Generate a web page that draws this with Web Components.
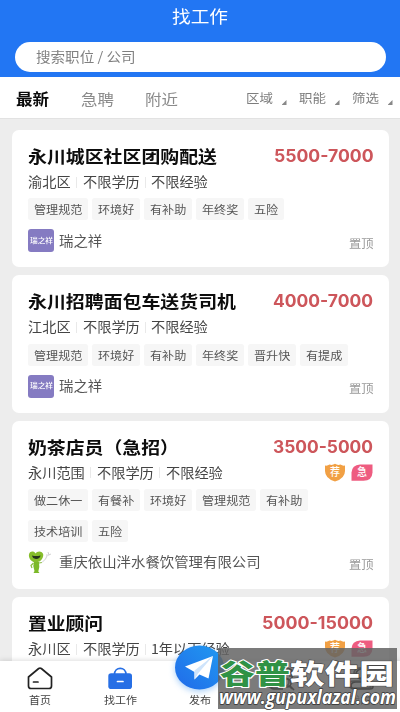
<!DOCTYPE html>
<html lang="zh-CN">
<head>
<meta charset="utf-8">
<title>找工作</title>
<style>
html,body{margin:0;padding:0;height:100%;overflow:hidden;background:#ededed}
body{font-family:"Noto Sans CJK SC",sans-serif}
</style>
</head>
<body>
<job-app></job-app>
<script>
const define = (name, html, setup) => {
  const tpl = document.createElement('template');
  tpl.innerHTML = html;
  customElements.define(name, class extends HTMLElement {
    connectedCallback() {
      if (this.shadowRoot) return;
      this.attachShadow({mode: 'open'}).append(tpl.content.cloneNode(true));
      if (setup) setup(this, this.shadowRoot);
    }
  });
};

/* Text set to an exact width: the glyphs are widened from their natural advance. */
define('wide-text', `
<style>
:host{display:inline-block;flex:none;white-space:nowrap;line-height:20px;height:20px}
span{display:inline-block;transform-origin:0 50%;white-space:pre}
</style><span></span>`, (el, root) => {
  const s = root.querySelector('span');
  s.textContent = el.getAttribute('text');
  el.style.fontSize = el.getAttribute('size') + 'px';
  const w = +el.getAttribute('w');
  const natural = s.offsetWidth ? s.getBoundingClientRect().width : w;
  el.style.width = w + 'px';
  s.style.transform = `scaleX(${w / natural})`;
});

define('search-bar', `
<style>
:host{display:flex;align-items:center;height:30px;margin:0 14px 0 15px;padding-left:21px;box-sizing:border-box;border-radius:15px;background:#fff;color:#808080}
</style><wide-text text="搜索职位 / 公司" size="13.3" w="99.5"></wide-text>`);

define('app-header', `
<style>
:host{display:flex;flex-direction:column;height:77px;background:#2276f3;color:#fff;flex:none}
.t{display:flex;justify-content:center;height:42px;padding-top:6px;box-sizing:border-box}
</style><div class="t"><wide-text text="找工作" size="17" w="56"></wide-text></div><search-bar></search-bar>`);

customElements.define('tab-bar', class extends HTMLElement {
  connectedCallback() {
    this.attachShadow({mode:'open'}).innerHTML = `
<style>
:host{display:flex;align-items:center;height:42px;padding-left:16px;box-sizing:border-box;background:#fff;border-bottom:1px solid #e2e2e2;flex:none}
.tabs{display:flex;gap:31.500px;color:#8b8b8b;width:230px;flex:none}
.on{color:#0b0b0b;font-weight:700}
.f{display:flex;color:#7d7d7d;padding-top:1px;gap:12.500px}
.f div{display:flex;flex:none}
i{width:5px;height:5px;margin:12px 0 0 8.500px;background:#888;clip-path:polygon(100% 0,100% 100%,0 100%)}
</style>
<div class="tabs"><wide-text class="on" text="最新" size="15.5" w="33"></wide-text><wide-text text="急聘" size="15.2" w="33"></wide-text><wide-text text="附近" size="15.2" w="33"></wide-text></div>
<div class="f">${['区域','职能','筛选'].map(t=>`<div><wide-text text="${t}" size="12" w="27"></wide-text><i></i></div>`).join('')}</div>`;
  }
});

define('tag-chip', `
<style>
:host{display:flex;align-items:center;justify-content:center;height:22px;border-radius:2.500px;background:#f6f6f6;color:#555}
</style>`, (el, root) => {
  const t = el.getAttribute('text');
  const w = t.length * 12.1;
  el.style.width = (w + 11.6) + 'px';
  root.innerHTML += `<wide-text text="${t}" size="11.5" w="${w}"></wide-text>`;
});

define('job-badges', `
<style>:host{display:flex;gap:5px}svg{display:block}text{font:500 11px "Noto Sans CJK SC",sans-serif;fill:#fff}</style>
<svg width="22" height="20" viewBox="0 0 22 20"><path d="M1 2.500Q3.500 3 5.500 1.600Q8.500 2.600 11 .8Q13.500 2.600 16.500 1.600Q18.500 3 21 2.500V8Q21 15.500 11 18.500Q1 15.500 1 8Z" fill="#f1a044"/><text x="6" y="13" textLength="10" lengthAdjust="spacingAndGlyphs">荐</text></svg>
<svg width="22" height="20" viewBox="0 0 22 20"><path d="M9 1.500H21.500V9.500Q21 17.800 12.500 17.800H.5V9.500Q1 2 9 1.500Z" fill="#ee5c80"/><text x="6" y="13" textLength="10" lengthAdjust="spacingAndGlyphs">急</text></svg>`);

define('company-logo', `
<style>
:host{display:block;width:26px;height:23px;flex:none}
.p{height:23px;border-radius:3px;background:#857bc2;color:#fff;display:flex;align-items:center;justify-content:center;font-weight:500}
.p wide-text{margin-top:-2px}
svg{display:block}
</style>`, (el, root) => {
  root.innerHTML += el.getAttribute('kind') === 'frog' ? `
<svg width="26" height="23" viewBox="0 0 26 23">
<path d="M7.500 11.500C4 11 .8 8 .9 4C1.200-.2 6-.3 7.500 2.500C9-.3 14.500-.4 15.300 3.700C15.200 8 12 11.300 7.500 11.500Z" fill="#86bd2b"/>
<path d="M4 4.500Q8 5.500 12.500 4.500Q12 7.800 8 8Q4.500 7.500 4 4.500Z" fill="#26331c"/>
<path d="M6 11H11L11.300 16L10.300 20.500L11.500 22H5.500L6.500 20L5.300 15Z" fill="#7cb928"/>
<path d="M5.500 12L3 14.500L4 17M11 12L14 11.500" fill="none" stroke="#8cc043" stroke-width="1.200"/>
<path d="M14 11.500L17.500 8L19 5M18 4Q20 5 23 3M20 1L21 4" fill="none" stroke="#ccc" stroke-width=".9"/></svg>`
  : `<div class="p"><wide-text text="瑞之祥" size="6.8" w="23"></wide-text></div>`;
});

customElements.define('job-card', class extends HTMLElement {
  connectedCallback() {
    const a = n => this.getAttribute(n);
    const meta = a('meta').split('|').map(t => {
      const n = t.startsWith('1') ? 5.55 : t.length;
      return `<wide-text text="${t}" size="13.3" w="${(n * 14.2).toFixed(1)}"></wide-text>`;
    }).join('<i></i>');
    const tags = (a('tags') || '').split('|').filter(Boolean).map(t => `<tag-chip text="${t}"></tag-chip>`).join('');
    const [title, tw] = a('title-text').split('|');
    const [pay, pw] = a('pay').split('|');
    const foot = a('company') ? `<div class="tags">${tags}</div>
<div class="r c"><div class="n"><company-logo kind="${a('logo')}"></company-logo><wide-text text="${a('company')}" size="13.3" w="${a('company').length * 14.4}"></wide-text></div><wide-text class="top" text="置顶" size="11.5" w="24.500"></wide-text></div>` : '';
    this.attachShadow({mode:'open'}).innerHTML = `
<style>
:host{display:block;box-sizing:border-box;padding:16px 16px 15px;border-radius:7px;background:#fff;flex:none}
.r{display:flex;justify-content:space-between;align-items:center}
.title{color:#0d0d0d;font-weight:700}
.pay{color:#cd565b;font-family:Inter,sans-serif;font-weight:700}
.m{height:20px;margin-top:6px}
.meta{display:flex;align-items:center;color:#444}
.meta i{width:1px;height:11px;margin:0 5.500px;background:#e9e9e9}
.tags{display:flex;flex-wrap:wrap;gap:9px 4.100px;margin-top:6.200px;padding-right:12px}
.c{margin-top:9px;height:23px}
.n{display:flex;align-items:center;gap:5px;color:#555}
.top{color:#999;margin-top:4px}
</style>
<div class="r"><wide-text class="title" text="${title}" size="17" w="${tw}"></wide-text><wide-text class="pay" text="${pay}" size="17" w="${pw}"></wide-text></div>
<div class="r m"><div class="meta">${meta}</div>${this.hasAttribute('badges') ? '<job-badges></job-badges>' : ''}</div>${foot}`;
  }
});

define('nav-item', `
<style>
:host{display:flex;flex-direction:column;align-items:center;width:80px;color:#444}
.i{height:29px;display:flex;align-items:flex-end;justify-content:center}
</style><div class="i"><slot></slot></div>`, (el, root) => {
  const t = el.getAttribute('text');
  root.innerHTML += `<wide-text text="${t}" size="10.5" w="${t.length * 11}"></wide-text>`;
});

define('bottom-nav', `
<style>
:host{display:flex;height:51px;background:#fff;box-shadow:0 -1px 5px rgba(0,0,0,.13);position:relative;flex:none}
svg{display:block;overflow:visible}
</style>
<nav-item text="首页"><svg width="26" height="23" viewBox="0 0 26 23" fill="none" stroke="#222" stroke-width="1.700" stroke-linejoin="round" stroke-linecap="round"><path d="M1.500 10L11.700 1.500Q13 .7 14.300 1.500L24.500 10V19Q24.500 21.500 22 21.500H4Q1.500 21.500 1.500 19Z"/><path d="M6.500 15H11"/></svg></nav-item>
<nav-item text="找工作"><svg width="26" height="23" viewBox="0 0 26 23"><path d="M7.500 7.500C7.500-.8 19-.8 19 7.500" fill="none" stroke="#276fe5" stroke-width="1.700"/><rect x="1.300" y="6.300" width="23.700" height="15.700" rx="2.800" fill="#276fe5"/><path d="M10.500 14.500H16" stroke="#fff" stroke-width="1.700" stroke-linecap="round"/></svg></nav-item>
<nav-item text="发布"><svg width="50" height="46" viewBox="0 0 50 46" style="margin-bottom:-1px;filter:drop-shadow(0 2px 3px #2386ef66)"><defs><linearGradient id="g" x1="1" y1="0" x2="0" y2="1"><stop offset="0" stop-color="#209bf1"/><stop offset="1" stop-color="#216ae9"/></linearGradient></defs><ellipse cx="24.500" cy="22.500" rx="24.500" ry="22" fill="url(#g)"/><path d="M10 21.500L38 11L19.500 27Z" fill="#fff"/><path d="M38 11L19.500 25.500V34.500L24.500 29.500L33.500 33.500Z" fill="#fff"/><path d="M38 11L19.500 25.500V34.500L23 28.500Z" fill="#cfe4fb"/></svg></nav-item>
<nav-item text="消息"><svg width="26" height="23" viewBox="0 0 26 23" fill="none" stroke="#222" stroke-width="1.700"><path d="M23 10V4Q23 1 20 1H5Q2 1 2 4V18Q2 21 5 21H14"/><circle cx="18" cy="15" r="4"/><path d="M21 18L25 22"/></svg></nav-item>
<nav-item text="我的"><svg width="26" height="23" viewBox="0 0 26 23" fill="none" stroke="#222" stroke-width="1.700"><ellipse cx="13" cy="6" rx="6" ry="5.200"/><path d="M5 21Q2 21 2 18Q2 14 7 14H19Q24 14 24 18Q24 21 21 21Z"/></svg></nav-item>`);

define('site-mark', `
<style>
:host{position:absolute;left:218px;top:648px;width:179px;height:61px;background:rgba(98,98,98,.84)}
svg{display:block;overflow:visible}
text{paint-order:stroke;stroke-linejoin:round}
.a,.b{font:900 27px "Noto Sans CJK SC",sans-serif}
.a{fill:#2f9245;stroke:#fff;stroke-width:2.200px}
.b{fill:#fff;stroke:#444;stroke-width:1.200px}
.u{font:italic 700 20px "Open Sans",sans-serif;fill:#fff;stroke:#333;stroke-width:1.500px}
.g{stroke:#4b4b4b;stroke-width:1.700;fill:none}
</style>
<svg width="179" height="61">
<g class="g"><path d="M74 30V24Q74 21 71 21H56Q53 21 53 24V38Q53 41 56 41H65"/><circle cx="69" cy="35" r="4"/><path d="M72 38L76 42"/><ellipse cx="144" cy="26" rx="6" ry="5.200"/><path d="M136 41Q133 41 133 38Q133 34 138 34H150Q155 34 155 38Q155 41 152 41Z"/></g>
<text class="a" x="2" y="35.500" textLength="70" lengthAdjust="spacingAndGlyphs">谷普</text>
<text class="b" x="72" y="35.500" textLength="104" lengthAdjust="spacingAndGlyphs">软件园</text>
<text class="u" x="1" y="56" textLength="177" lengthAdjust="spacingAndGlyphs">www.gupuxlazal.com</text>
</svg>`);

define('job-app', `
<style>
:host{display:flex;flex-direction:column;width:400px;height:712px;position:relative;overflow:hidden;background:#ededed}
main{flex:1;min-height:0;overflow:hidden;display:flex;flex-direction:column;gap:8.200px;padding:11px 11px 0 12px}
</style>
<app-header></app-header><tab-bar></tab-bar>
<main>
<job-card title-text="永川城区社区团购配送|189" pay="5500-7000|99.5" meta="渝北区|不限学历|不限经验" tags="管理规范|环境好|有补助|年终奖|五险" logo="purple" company="瑞之祥"></job-card>
<job-card title-text="永川招聘面包车送货司机|208" pay="4000-7000|100" meta="江北区|不限学历|不限经验" tags="管理规范|环境好|有补助|年终奖|晋升快|有提成" logo="purple" company="瑞之祥"></job-card>
<job-card title-text="奶茶店员（急招）|151" pay="3500-5000|100" meta="永川范围|不限学历|不限经验" badges tags="做二休一|有餐补|环境好|管理规范|有补助|技术培训|五险" logo="frog" company="重庆依山泮水餐饮管理有限公司"></job-card>
<job-card title-text="置业顾问|75" pay="5000-15000|111" meta="永川区|不限学历|1年以下经验" badges></job-card>
</main>
<bottom-nav></bottom-nav><site-mark></site-mark>`);
</script>
</body>
</html>
